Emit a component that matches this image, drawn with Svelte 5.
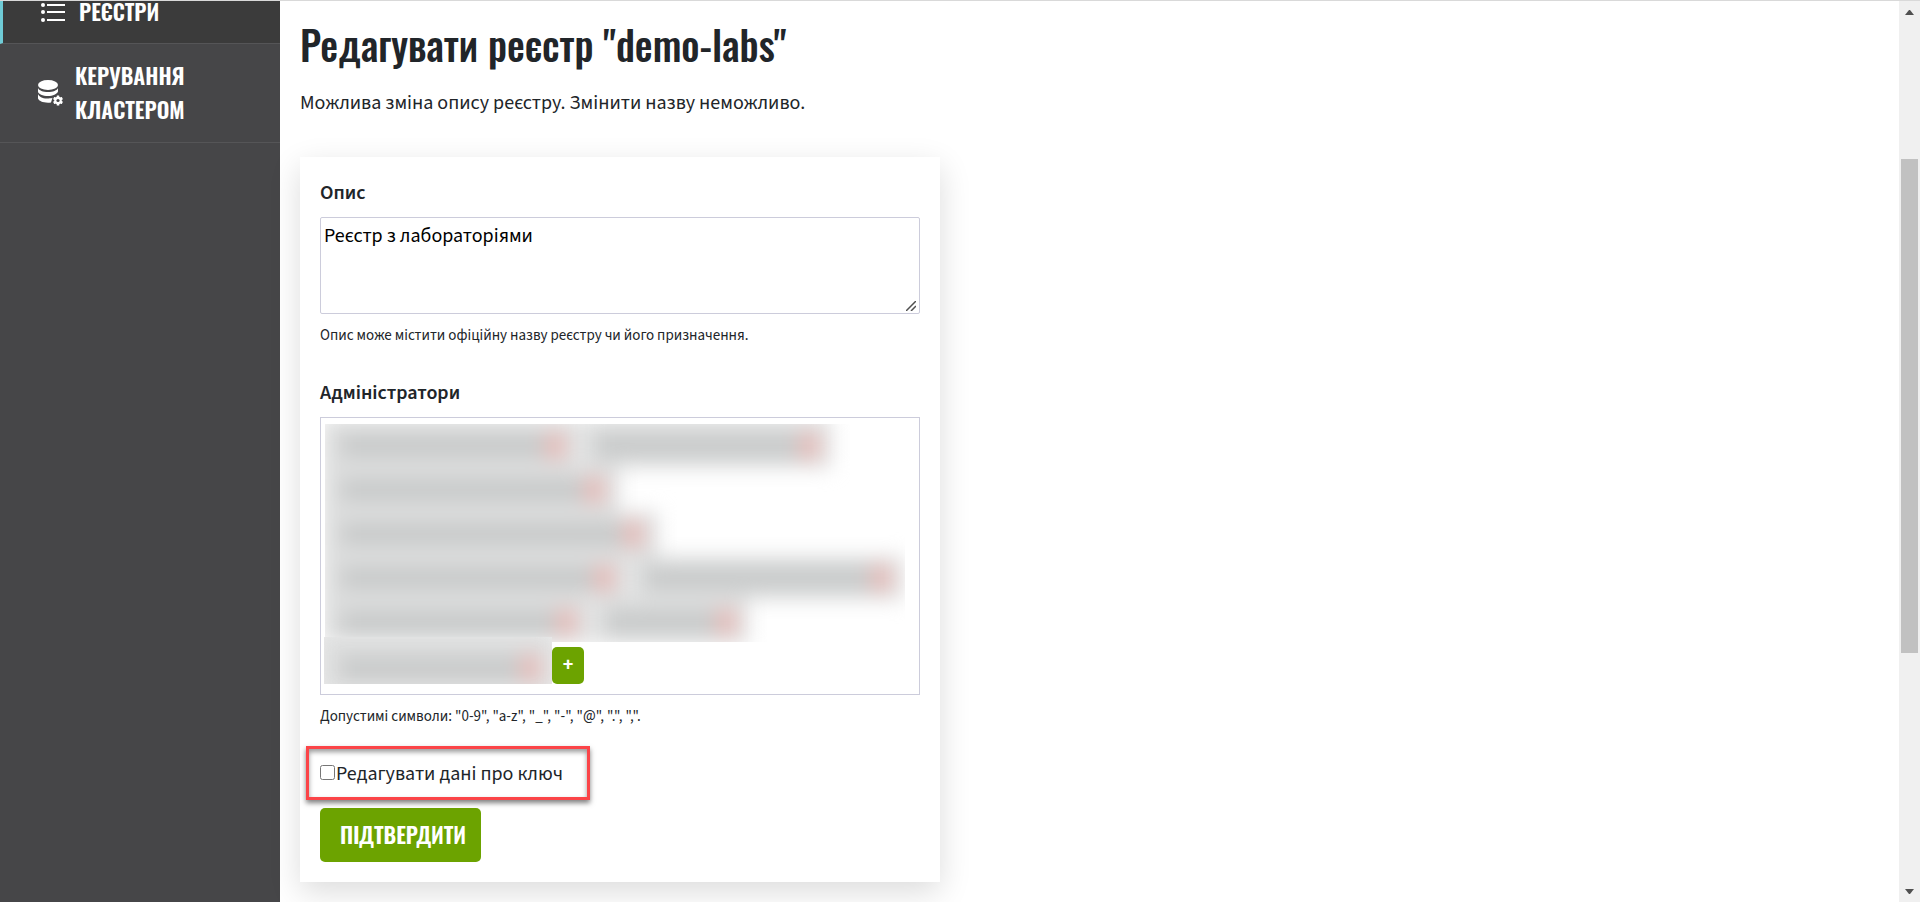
<script>
  let description = $state('Реєстр з лабораторіями');
  let editKey = $state(false);

  const rows = [
    [258, 248],
    [297],
    [336],
    [307, 271],
    [269, 154]
  ];
  const lastRow = [234];
</script>

{#snippet chipRow(row)}
  <div class="chips">
    {#each row as width}
      <span class="chip" style="width: {width}px"><i></i><b></b></span>
    {/each}
  </div>
{/snippet}

<div class="page">
  <nav class="sidebar">
    <a class="item active" href="#registries">
      <svg viewBox="0 0 24 22" width="24" height="22" fill="#fff" aria-hidden="true">
        <circle cx="2" cy="4" r="2" /><circle cx="2" cy="11" r="2" /><circle cx="2" cy="19" r="2" />
        <path d="M6 3h18v2H6zM6 10h18v2H6zM6 18h18v2H6z" />
      </svg>
      <span>РЕЄСТРИ</span>
    </a>
    <a class="item cluster" href="#cluster">
      <svg viewBox="0 0 26 26" width="26" height="26" aria-hidden="true">
        <g fill="#fff">
          <ellipse cx="10" cy="5" rx="10" ry="5" />
          <path d="M0 8c1 2.500 5 4 10 4s9-1.500 10-4v3.500c-1 2.500-5 4.500-10 4.500S0 14 0 11.500z" />
          <path d="M0 14c1 2.500 4 4.500 9 4.500 2 0 4-.2 5.500-.8L13 22.500c-7 .8-12-1.200-13-4z" />
        </g>
        <g transform="translate(20 20.500)">
          <g fill="#fff">
            <rect x="-1.300" y="-5" width="2.600" height="10" rx=".5" />
            <rect x="-1.300" y="-5" width="2.600" height="10" rx=".5" transform="rotate(60)" />
            <rect x="-1.300" y="-5" width="2.600" height="10" rx=".5" transform="rotate(120)" />
            <circle r="3.700" />
          </g>
          <circle r="1.600" fill="#464648" />
        </g>
      </svg>
      <span>КЕРУВАННЯ<br />КЛАСТЕРОМ</span>
    </a>
  </nav>

  <main>
    <h1>Редагувати реєстр "demo-labs"</h1>
    <p class="lead">Можлива зміна опису реєстру. Змінити назву неможливо.</p>

    <form class="card" onsubmit={(e) => e.preventDefault()}>
      <label class="title" for="description">Опис</label>
      <div class="area">
        <textarea id="description" bind:value={description}></textarea>
        <svg class="grip" viewBox="0 0 10 10" width="10" height="10" aria-hidden="true">
          <path d="M0 10 10 0M5 10l5-5" stroke="#505050" stroke-width="1.500" />
        </svg>
      </div>
      <p class="hint">Опис може містити офіційну назву реєстру чи його призначення.</p>

      <div class="title second">Адміністратори</div>
      <div class="admins">
        <div class="veil">
          <div class="haze">
            {#each rows as row}
              {@render chipRow(row)}
            {/each}
          </div>
        </div>
        <div class="tail">
          <div class="veil last">
            <div class="haze">
              {@render chipRow(lastRow)}
            </div>
          </div>
          <button class="add" type="button">+</button>
        </div>
      </div>
      <p class="hint">Допустимі символи: "0-9", "a-z", "_", "-", "@", ".", ",".</p>

      <div class="check">
        <input id="edit-key" type="checkbox" bind:checked={editKey} />
        <label for="edit-key">Редагувати дані про ключ</label>
        <span class="frame"></span>
      </div>
      <button class="submit" type="submit">ПІДТВЕРДИТИ</button>
    </form>
  </main>

  <div class="scrollbar" aria-hidden="true">
    <svg viewBox="0 0 9 5" width="9" height="5"><path d="M0 5 4 0h1l4 5z" fill="#505050" /></svg>
    <div class="track"><div class="thumb"></div></div>
    <svg viewBox="0 0 9 5" width="9" height="5"><path d="M0 0h9L5 5H4z" fill="#505050" /></svg>
  </div>
</div>

<style>
  :global(body) {
    margin: 0;
    background: #fff;
  }
  .page {
    --head: 'Oswald', 'Roboto', sans-serif;
    box-sizing: border-box;
    display: flex;
    height: 100vh;
    overflow: hidden;
    border-top: 1px solid #d9d9d9;
    color: #212529;
    font: 20px/26px 'Source Sans Pro', 'Source Sans 3', 'Noto Sans', sans-serif;
  }
  .sidebar {
    flex: 0 0 280px;
    background: #464648;
  }
  .item {
    display: flex;
    align-items: center;
    box-sizing: border-box;
    border-bottom: 1px solid #555557;
    color: #fff;
    font: 600 22px/34px var(--head);
    text-decoration: none;
  }
  .active {
    gap: 14px;
    padding: 0 0 20px 38px;
    border-left: 3px solid #6fcbd6;
    background: #3b3b3b;
    line-height: 20px;
  }
  .active span {
    padding-bottom: 2px;
  }
  .cluster {
    gap: 11px;
    padding: 14px 0 16px 38px;
  }
  .cluster svg {
    margin-top: 2px;
  }
  main {
    flex: 1;
    min-width: 0;
    padding: 15px 20px 0;
  }
  h1 {
    margin: 0;
    font: 500 40px/56px var(--head);
  }
  p {
    margin: 0;
  }
  .lead {
    margin: 18px 0 41px;
  }
  .card {
    box-sizing: border-box;
    display: flex;
    flex-direction: column;
    align-items: flex-start;
    max-width: 640px;
    padding: 23px 20px 20px;
    background: #fff;
    box-shadow: 0 10px 30px rgba(0, 0, 0, 0.14);
  }
  .title {
    margin-bottom: 11px;
    font-weight: 600;
  }
  .second {
    margin-top: 33px;
  }
  .area {
    position: relative;
    display: flex;
    width: 100%;
  }
  textarea {
    box-sizing: border-box;
    width: 100%;
    height: 97px;
    margin: 0;
    padding: 5px 3px;
    border: 1px solid #ccccdb;
    border-radius: 2px;
    background: #fff;
    color: #000;
    font: inherit;
    resize: none;
  }
  .grip {
    position: absolute;
    right: 4px;
    bottom: 3px;
  }
  .hint {
    margin-top: 11px;
    font-size: 15px;
    line-height: 22px;
  }
  .admins {
    box-sizing: border-box;
    width: 100%;
    padding: 6px 14px 10px 3px;
    border: 1px solid #ccccdb;
  }
  .veil {
    height: 218px;
    margin-left: 1px;
    overflow: hidden;
  }
  .haze {
    margin: -6px 0 0 -3px;
    filter: blur(10px);
  }
  .tail {
    display: flex;
    align-items: flex-end;
    margin-top: -5px;
  }
  .last {
    position: relative;
    width: 228px;
    height: 47px;
    margin: 0;
    background: #efefef;
  }
  .chips {
    display: flex;
    gap: 3px;
  }
  .chips:first-child .chip {
    height: 50px;
    padding-top: 6px;
  }
  .last .chips:first-child .chip {
    height: 64px;
    padding-top: 10px;
  }
  .chip {
    display: flex;
    flex: none;
    align-items: center;
    box-sizing: border-box;
    height: 44px;
    padding: 0 15px 0 20px;
    background: #dddede;
  }
  .chip + .chip {
    padding: 0 12px 0 13px;
  }
  .chip i {
    flex: 1;
    height: 22px;
    background: #c7c9c9;
  }
  .chip b {
    width: 20px;
    height: 26px;
    background: #e8bcb9;
  }
  button {
    border: 0;
    background: #6ca300;
    color: #fff;
    cursor: pointer;
  }
  .add {
    width: 32px;
    height: 37px;
    padding: 0 0 2px;
    border-radius: 5px;
    font: 700 20px/30px 'Source Sans Pro', 'Source Sans 3', 'Noto Sans', sans-serif;
  }
  .check {
    position: relative;
    display: flex;
    align-items: center;
    gap: 1px;
    margin: 33px 0 21px;
  }
  .check input {
    width: 15px;
    height: 15px;
    margin: 0 0 4px;
  }
  .frame {
    position: absolute;
    inset: -15px -27px -13px -14px;
    border: 3px solid #fb4448;
    box-shadow: 0 3px 5px rgba(0, 0, 0, 0.5), inset 0 3px 5px rgba(0, 0, 0, 0.4);
    pointer-events: none;
  }
  .submit {
    height: 54px;
    padding: 0 15px 2px 20px;
    border-radius: 5px;
    font: 600 22px/34px var(--head);
  }
  .scrollbar {
    display: flex;
    flex: 0 0 21px;
    flex-direction: column;
    align-items: center;
    gap: 7px;
    box-sizing: border-box;
    padding: 9px 0 8px;
    background: #f0f0f0;
  }
  .track {
    flex: 1;
    width: 17px;
  }
  .thumb {
    height: 494px;
    margin-top: 137px;
    background: #c1c1c1;
  }
</style>
